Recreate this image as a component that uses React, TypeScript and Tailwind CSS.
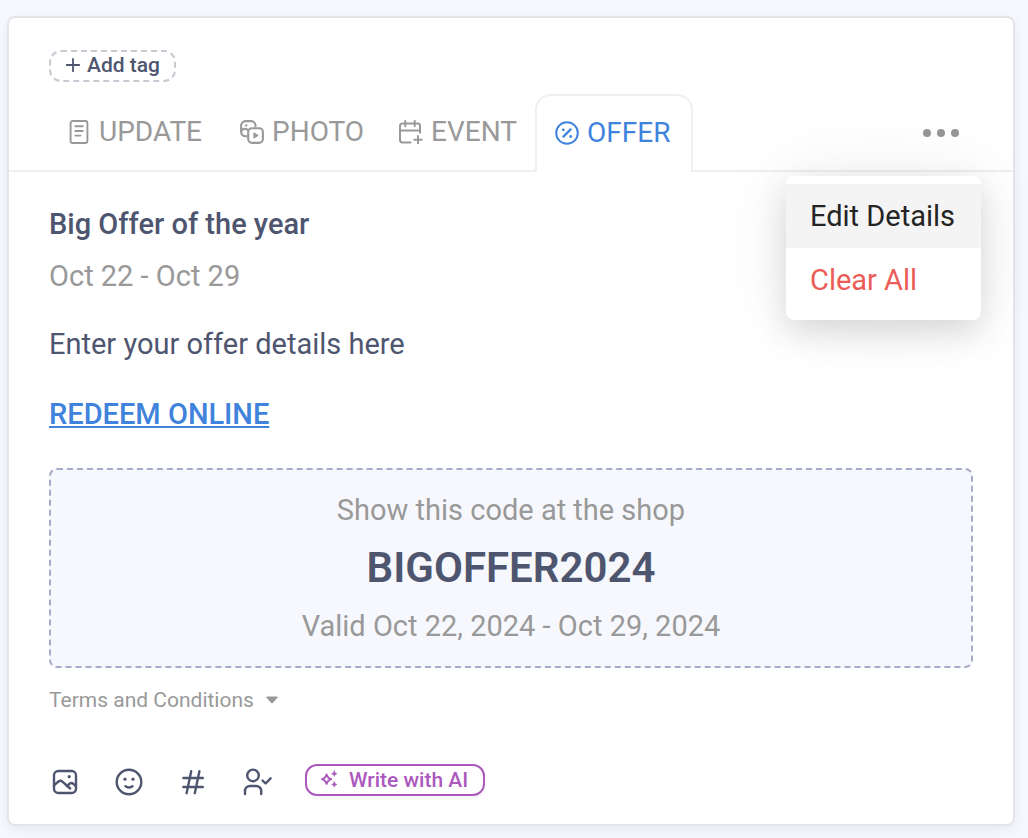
import { useState } from 'react';
import type { ReactNode } from 'react';

const stroke = {
  fill: 'none',
  stroke: 'currentColor',
  strokeLinecap: 'round',
  strokeLinejoin: 'round',
} as const;

function UpdateIcon() {
  return (
    <svg className="size-6 shrink-0" viewBox="0 0 24 24" strokeWidth="1.9" aria-hidden="true" {...stroke}>
      <rect x="3.6" y="1" width="16.8" height="22" rx="2" />
      <path d="M8.3 6.3h7.5M8.3 11h7.5M8.3 15.6h5.2" />
    </svg>
  );
}

function PhotoIcon() {
  return (
    <svg className="size-6 shrink-0" viewBox="0 0 24 24" strokeWidth="2.1" aria-hidden="true" {...stroke}>
      <path d="M6.8 16.2H5.5A4.4 4.4 0 0 1 1.1 11.8V5.5a4.4 4.4 0 0 1 4.4-4.4h5.6a4.4 4.4 0 0 1 4.4 4.4v1" />
      <path d="M1.3 10.8c1.6-2.2 4.2-2.6 6.2-1" />
      <rect x="8.2" y="8.2" width="14.7" height="14.7" rx="3.8" />
      <circle cx="6.2" cy="5.4" r="1.2" fill="currentColor" stroke="none" />
      <path d="M13.9 13.1v5l4-2.5z" fill="currentColor" strokeWidth="1" />
    </svg>
  );
}

function EventIcon() {
  return (
    <svg className="size-6 shrink-0" viewBox="0 0 24 24" strokeWidth="2" aria-hidden="true" {...stroke}>
      <path d="M11.6 22.5H3.4A2.4 2.4 0 0 1 1 20.1V5.8a2.4 2.4 0 0 1 2.4-2.4h15.2A2.4 2.4 0 0 1 21 5.8v7" />
      <path d="M1 10.6h20M6.3 1v5.2M15.7 1v5.2M19 16v7.500M15.200 19.800h7.600" />
    </svg>
  );
}

function OfferIcon() {
  return (
    <svg className="size-6 shrink-0" viewBox="0 0 24 24" strokeWidth="2" aria-hidden="true" {...stroke}>
      <circle cx="12" cy="12" r="10.8" />
      <path d="M8.4 15.6l7.2-7.2" strokeWidth="2.2" />
      <circle cx="8.3" cy="8.8" r="1.4" fill="currentColor" stroke="none" />
      <circle cx="15.7" cy="15.5" r="1.4" fill="currentColor" stroke="none" />
    </svg>
  );
}

function ImageIcon() {
  return (
    <svg className="size-8" viewBox="0 0 32 32" strokeWidth="2.4" aria-hidden="true" {...stroke}>
      <rect x="5" y="5" width="22" height="22" rx="4.2" />
      <path d="M5 19.3l4.4-3.8a3 3 0 0 1 4 .1l7.8 6.9" />
      <path d="M17.8 20l2.8-2.3a3 3 0 0 1 3.8.2l2.4 2.300" />
      <circle cx="20.2" cy="10.7" r="1.6" fill="currentColor" stroke="none" />
    </svg>
  );
}

function SmileIcon() {
  return (
    <svg className="size-8" viewBox="0 0 32 32" strokeWidth="2.4" aria-hidden="true" {...stroke}>
      <circle cx="16" cy="16" r="12.3" />
      <path d="M12.4 20.2c1.8 1.7 5.4 1.7 7.2 0" />
      <circle cx="12" cy="13.2" r="1.6" fill="currentColor" stroke="none" />
      <circle cx="20" cy="13.2" r="1.6" fill="currentColor" stroke="none" />
    </svg>
  );
}

function HashIcon() {
  return (
    <svg className="size-8" viewBox="0 0 32 32" strokeWidth="2.4" aria-hidden="true" {...stroke}>
      <path d="M6.4 12h19.4M6.4 21h19.4M14.2 5.2l-4.6 22M22.4 5.2l-4.6 22" />
    </svg>
  );
}

function MentionIcon() {
  return (
    <svg className="size-8" viewBox="0 0 32 32" strokeWidth="2.4" aria-hidden="true" {...stroke}>
      <circle cx="12" cy="9.4" r="5.8" />
      <path d="M4 28v-3a5 5 0 0 1 5-5h6.2a5 5 0 0 1 5 5v3" />
      <path d="M21.6 14.6l3 2.9 5-5.2" />
    </svg>
  );
}

function SparkleIcon() {
  return (
    <svg className="size-5 shrink-0" viewBox="0 0 20 20" strokeWidth="1.8" aria-hidden="true" {...stroke}>
      <path d="M7.6 4.400c.8 3 1.600 3.800 4.600 4.800-3 1-3.800 1.800-4.600 4.800-.8-3-1.600-3.800-4.600-4.800 3-1 3.800-1.800 4.600-4.800z" />
      <path
        d="M15.300 1c.5 1.700 1 2.200 2.700 2.700-1.700.5-2.200 1-2.700 2.700-.5-1.700-1-2.200-2.700-2.700 1.700-.5 2.200-1 2.700-2.700zM15.300 11.700c.5 1.700 1 2.200 2.700 2.700-1.700.5-2.200 1-2.700 2.700-.5-1.700-1-2.200-2.700-2.700 1.700-.5 2.200-1 2.700-2.700z"
        fill="currentColor"
        strokeWidth="0.6"
      />
    </svg>
  );
}

const inactiveTabs = [
  { name: 'UPDATE', icon: <UpdateIcon />, width: 'min-w-[173px]' },
  { name: 'PHOTO', icon: <PhotoIcon />, width: 'min-w-[159px]' },
  { name: 'EVENT', icon: <EventIcon />, width: 'min-w-[136px]' },
];

function ToolButton({ label, children }: { label: string; children: ReactNode }) {
  return (
    <button type="button" aria-label={label} className="flex h-9 w-8 items-center justify-center text-[#4e566f]">
      {children}
    </button>
  );
}

function MoreMenu() {
  const [open, setOpen] = useState(true);

  return (
    <div className="relative flex items-center">
      <button
        type="button"
        aria-label="More options"
        aria-expanded={open}
        onClick={() => setOpen(!open)}
        className="flex h-10 items-center gap-1.5 px-3.5"
      >
        <span className="size-2 rounded-full bg-[#979797]" />
        <span className="size-2 rounded-full bg-[#979797]" />
        <span className="size-2 rounded-full bg-[#979797]" />
      </button>
      {open && (
        <div className="absolute top-full -right-2 z-10 mt-[23px] w-[195px] rounded-lg bg-white py-2 text-[29px] shadow-[0_12px_32px_rgba(0,0,0,0.13),0_0_80px_rgba(0,0,0,0.07)]">
          <button type="button" className="block h-16 w-full bg-[#f4f4f4] px-6 text-left whitespace-nowrap text-[#242424]">
            Edit Details
          </button>
          <button type="button" className="block h-16 w-full px-6 text-left whitespace-nowrap text-[#eb5c56]">
            Clear All
          </button>
        </div>
      )}
    </div>
  );
}

export default function App() {
  return (
    <main className="min-h-screen bg-[#f7f8fd] pt-4 pr-[13px] pb-3 pl-[7px] font-['Roboto',sans-serif] text-[29px] leading-9 text-[#999]">
      <div className="rounded-lg border-2 border-[#e3e5e8] bg-white pt-8 shadow-[0_4px_12px_rgba(0,0,0,0.06)]">
        <div className="flex px-10">
          <button
            type="button"
            className="flex h-8 items-center gap-1.5 rounded-xl border-2 border-dashed border-[#c8cad3] px-3.5 pb-0.5 text-[21px] font-medium text-[#4e566f]"
          >
            <svg className="size-4" viewBox="0 0 16 16" strokeWidth="1.8" aria-hidden="true" {...stroke}>
              <path d="M8 1.800v12.400M1.800 8h12.400" />
            </svg>
            Add tag
          </button>
        </div>

        <div className="mt-3 flex h-[78px] text-[28px]">
          <div className="w-[58px] border-b-2 border-[#efefef]" />
          {inactiveTabs.map((tab) => (
            <button
              key={tab.name}
              type="button"
              className={`flex items-center gap-2 border-b-2 border-[#efefef] ${tab.width}`}
            >
              {tab.icon}
              {tab.name}
            </button>
          ))}
          <button
            type="button"
            className="flex min-w-[158px] items-center gap-2 rounded-t-2xl border-2 border-b-0 border-[#efefef] pb-0.5 pl-[18px] text-[#3f83dc]"
          >
            <OfferIcon />
            OFFER
          </button>
          <div className="flex flex-1 items-center justify-end border-b-2 border-[#efefef] pt-0.5 pr-10">
            <MoreMenu />
          </div>
        </div>

        <div className="px-10 pt-[34px] pb-6">
          <h2 className="font-medium text-[#4e566f]">Big Offer of the year</h2>
          <p className="mt-4">Oct 22 - Oct 29</p>
          <p className="mt-8 text-[#4e566f]">Enter your offer details here</p>
          <p className="mt-[34px]">
            <a href="#" className="font-medium text-[#3f83dc] underline decoration-2 underline-offset-2">
              REDEEM ONLINE
            </a>
          </p>

          <div className="mt-9 rounded-lg border-2 border-dashed border-[#a5abc8] bg-[#f7f8fd] py-[22px] text-center">
            <p>Show this code at the shop</p>
            <p className="my-4 text-[42px] leading-12 font-semibold text-[#4e566f]">BIGOFFER2024</p>
            <p>Valid Oct 22, 2024 - Oct 29, 2024</p>
          </div>

          <button type="button" className="mt-5 flex items-center gap-3 text-[21px] leading-6">
            Terms and Conditions
            <svg className="h-2 w-3" viewBox="0 0 12 8" fill="currentColor" aria-hidden="true">
              <path d="M1 .5h10a.7.7 0 0 1 .5 1.200L6.700 7a1 1 0 0 1-1.400 0L.5 1.700A.7.7 0 0 1 1 .5z" />
            </svg>
          </button>

          <div className="mt-[52px] flex items-start gap-8">
            <ToolButton label="Add image">
              <ImageIcon />
            </ToolButton>
            <ToolButton label="Add emoji">
              <SmileIcon />
            </ToolButton>
            <ToolButton label="Add hashtag">
              <HashIcon />
            </ToolButton>
            <ToolButton label="Mention">
              <MentionIcon />
            </ToolButton>
            <button
              type="button"
              className="flex h-8 w-[180px] items-center gap-2.5 rounded-xl border-2 border-[#ab59bd] px-3 text-[21px] font-medium whitespace-nowrap text-[#ab59bd] shadow-[0_3px_4px_rgba(0,0,0,0.04)]"
            >
              <SparkleIcon />
              Write with AI
            </button>
          </div>
        </div>
      </div>
    </main>
  );
}
